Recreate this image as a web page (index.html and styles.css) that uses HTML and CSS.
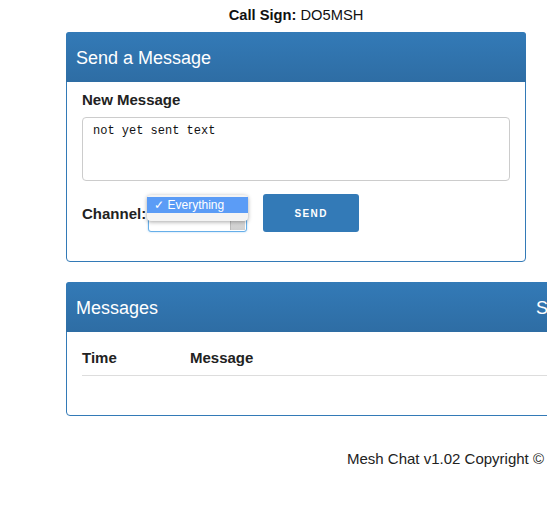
FILE: index.html
```html
<!DOCTYPE html>
<html>
<head>
<meta charset="utf-8">
<link rel="stylesheet" href="styles.css">
</head>
<body>
<div class="page">
  <div class="callsign"><b>Call Sign:</b> DO5MSH</div>

  <div class="panel send-panel">
    <div class="panel-heading">Send a Message</div>
    <div class="panel-body">
      <div class="label">New Message</div>
      <div class="textarea">not yet sent text</div>
      <div class="controls">
        <span class="label">Channel:</span>
        <div class="select">
          <div class="select-box"><span class="select-arrow"></span></div>
          <div class="popup"><div class="option">✓&nbsp;Everything</div></div>
        </div>
        <div class="btn">SEND</div>
      </div>
    </div>
  </div>

  <div class="panel msg-panel">
    <div class="panel-heading msg-heading"><span class="msg-title">Messages</span><span>Search</span></div>
    <div class="panel-body msg-body">
      <div class="thead"><span class="col-time">Time</span><span>Message</span></div>
    </div>
  </div>

  <div class="footer">Mesh Chat v1.02 Copyright ©</div>
</div>
</body>
</html>
```

FILE: styles.css
```css
html, body {
  margin: 0;
  padding: 0;
  overflow: hidden;
  background: #fff;
}
body {
  font-family: "Liberation Sans", Arial, sans-serif;
  font-size: 14px;
  color: #333;
}
.page {
  width: 1100px;
}
.callsign {
  width: 592px;
  text-align: center;
  font-size: 14.7px;
  line-height: 17px;
  padding-top: 7px;
  color: #111;
}
.panel {
  margin-left: 66px;
  border: 1px solid #337ab7;
  border-radius: 4px;
  background: #fff;
  box-sizing: border-box;
}
.send-panel {
  width: 460px;
  margin-top: 8px;
}
.panel-heading {
  background: linear-gradient(#337ab7, #2e6da4);
  color: #fff;
  font-size: 18px;
  height: 50px;
  line-height: 49px;
  padding-left: 10px;
  border-radius: 3px 3px 0 0;
  margin: -1px -1px 0 -1px;
  padding-top: 2px;
  box-sizing: border-box;
}
.panel-body {
  padding: 9px 15px 0 15px;
}
.label {
  font-weight: bold;
  font-size: 15px;
  color: #222;
  line-height: 18px;
}
.textarea {
  margin-top: 8px;
  width: 428px;
  height: 64px;
  box-sizing: border-box;
  border: 1px solid #ccc;
  border-radius: 4px;
  font-family: "Liberation Mono", "Courier New", monospace;
  font-size: 12px;
  color: #111;
  padding: 5px 10px;
  line-height: 16px;
}
.controls {
  display: flex;
  align-items: center;
  margin-top: 13px;
  height: 38px;
  padding-bottom: 29px;
}
.controls .label {
  margin-top: 2px;
}
.select {
  position: relative;
  width: 101px;
  height: 37px;
  margin-left: 1px;
}
.select-box {
  position: absolute;
  left: 1px;
  top: 16px;
  width: 99px;
  height: 21px;
  box-sizing: border-box;
  border: 1px solid #66afe9;
  border-radius: 3px;
  box-shadow: 0 0 2px rgba(102,175,233,.6);
  background: #fff;
}
.select-arrow {
  position: absolute;
  right: 1px;
  top: 1px;
  width: 14px;
  height: 17px;
  background: linear-gradient(#e6e6e6, #cfcfcf);
  border-left: 1px solid #bbb;
}
.popup {
  position: absolute;
  left: 0;
  top: 0;
  width: 101px;
  height: 26px;
  box-sizing: border-box;
  background: #f4f4f4;
  border-radius: 4px;
  box-shadow: 0 1px 4px rgba(0,0,0,.35);
  padding-top: 2px;
}
.option {
  background: #5b9cf6;
  color: #fff;
  font-family: "Liberation Sans", Arial, sans-serif;
  font-size: 12px;
  height: 16px;
  line-height: 16px;
  padding-left: 7px;
}
.btn {
  margin-left: 15px;
  width: 96px;
  height: 38px;
  background: #337ab7;
  border-radius: 3px;
  color: #fff;
  font-size: 10px;
  font-weight: bold;
  letter-spacing: 1.4px;
  display: flex;
  align-items: center;
  justify-content: center;
}
.msg-panel {
  width: 700px;
  margin-top: 20px;
  height: 134px;
}
.msg-heading {
  display: flex;
  height: 50px;
  line-height: 48px;
}
.msg-title {
  width: 460px;
}
.msg-body {
  padding-top: 17px;
}
.thead {
  display: flex;
  font-weight: bold;
  font-size: 15px;
  color: #222;
  line-height: 18px;
  padding-bottom: 8px;
  border-bottom: 1px solid #ddd;
}
.col-time {
  width: 108px;
}
.footer {
  padding-left: 347px;
  margin-top: 34px;
  font-size: 15px;
  color: #222;
  white-space: nowrap;
}
```
